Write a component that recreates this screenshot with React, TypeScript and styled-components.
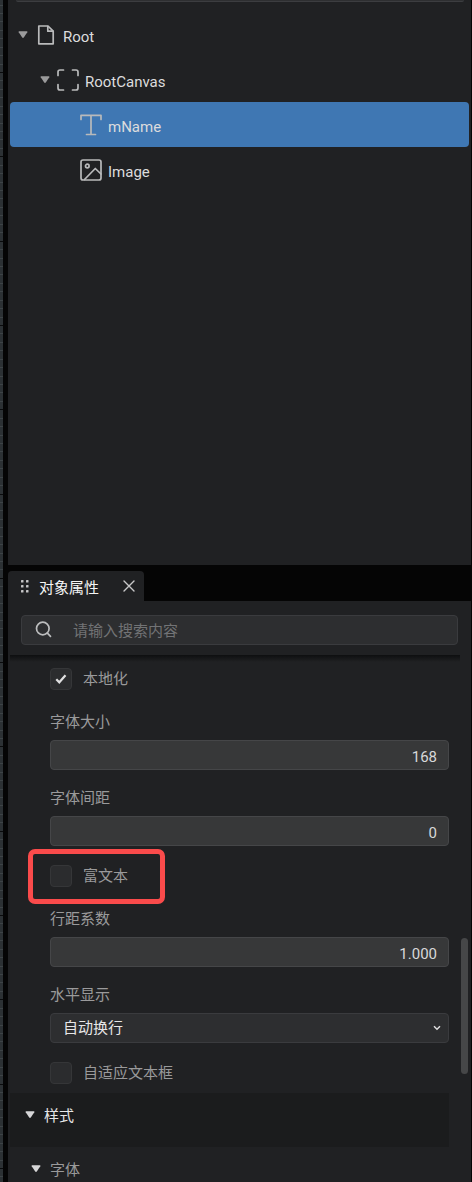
import React, { useState } from "react";
import styled, { createGlobalStyle } from "styled-components";

const GlobalStyle = createGlobalStyle`
  *, *::before, *::after { box-sizing: border-box; }
  html, body { margin: 0; background: #050505; }
  body, input, select, button {
    font-family: Roboto, "Noto Sans CJK SC", sans-serif;
    font-size: 15px;
  }
`;

const Shell = styled.div`
  display: flex;
  min-height: 100vh;
  padding-right: 1px;
  background: #050505;
`;

const RulerStrip = styled.div`
  position: relative;
  flex: none;
  width: 3px;
  margin-right: 5px;
  background: #2c3134;
  overflow: hidden;
`;

const RulerDrawing = styled.svg`
  position: absolute;
  top: 0;
  left: 0;
`;

const Dock = styled.div`
  flex: 1;
  min-width: 0;
  display: flex;
  flex-direction: column;
`;

const TreePanel = styled.section`
  flex: 1;
  padding: 0 2px;
  background: #202123;
`;

const FilterEdge = styled.div`
  height: 2px;
  margin: 0 5px 10px 6px;
  background: #2e2f31;
  border-bottom: 1px solid #3c3d40;
  border-radius: 0 0 4px 4px;
`;

const TreeList = styled.ul`
  list-style: none;
  margin: 0;
  padding: 0;
`;

const TreeRow = styled.li<{ $indent: number; $selected?: boolean }>`
  display: flex;
  align-items: center;
  height: 45px;
  padding-left: ${(p) => p.$indent}px;
  border-radius: 4px;
  color: #dcdcdd;
  background: ${(p) => (p.$selected ? "#3f77b3" : "transparent")};
`;

const TreeToggle = styled.button`
  display: flex;
  width: 10px;
  height: 8px;
  margin-right: 6px;
  padding: 0;
  border: 0;
  background: none;
  color: #9a9a9b;
`;

const TreeIcon = styled.span`
  display: flex;
  justify-content: center;
  width: 24px;
  padding-top: 1px;
  color: #b9babb;
`;

const TreeLabel = styled.span`
  padding-top: 4px;
  margin-left: 5px;
  line-height: 20px;
`;

const TabBar = styled.div`
  display: flex;
  margin-top: 6px;
`;

const Tab = styled.div`
  display: flex;
  align-items: center;
  width: 136px;
  height: 30px;
  padding: 0 9px 0 13px;
  border-radius: 4px 4px 0 0;
  background: #202123;
  color: #f4f4f4;
`;

const TabTitle = styled.span`
  flex: 1;
  margin-left: 10px;
  padding-top: 4px;
  line-height: 20px;
`;

const CloseButton = styled.button`
  display: flex;
  padding: 0;
  border: 0;
  background: none;
  color: #c8c8c9;
`;

const PropertyPanel = styled.section`
  background: #202123;
`;

const SearchBox = styled.label`
  display: flex;
  align-items: center;
  height: 30px;
  padding-left: 13px;
  border: 1px solid #3a3b3e;
  border-radius: 4px;
  background: #2d2e30;
  color: #bcbdbe;
`;

const SearchIcon = styled.svg`
  margin-bottom: 2px;
`;

const SearchHeader = styled.div`
  padding: 14px 13px 10px;
`;

const SearchInput = styled.input`
  flex: 1;
  min-width: 0;
  margin-left: 21px;
  padding: 1px 0 0;
  border: 0;
  outline: 0;
  background: none;
  color: #e2e2e3;
  &::placeholder { color: #727375; opacity: 1; }
`;

const HeaderShadow = styled.div`
  height: 7px;
  margin: 0 11px 0 2px;
  background: linear-gradient(#0e0f10, #202123);
`;

const PropertyBody = styled.div`
  display: flex;
  padding-left: 2px;
`;

const PropertyColumn = styled.div`
  flex: 1;
  min-width: 0;
`;

const FieldStack = styled.div`
  display: flex;
  flex-direction: column;
  gap: 16px;
  padding: 3px 0 5px 40px;
`;

const Field = styled.div`
  display: flex;
  flex-direction: column;
  gap: 6px;
`;

const FieldLabel = styled.label`
  line-height: 24px;
  color: #9a9a9b;
`;

const NumberInput = styled.input`
  width: 100%;
  height: 30px;
  padding: 3px 11px 0;
  border: 1px solid #454648;
  border-radius: 4px;
  outline: 0;
  background: #373839;
  color: #d8d8d9;
  text-align: right;
`;

const SelectFrame = styled.div`
  display: grid;
  grid-template-columns: 1fr 16px;
  align-items: center;
`;

const SelectInput = styled.select`
  grid-area: 1 / 1 / 2 / 3;
  width: 100%;
  height: 30px;
  padding: 0 12px;
  border: 1px solid #3a3b3e;
  border-radius: 4px;
  appearance: none;
  background: #2d2e30;
  color: #e6e6e7;
`;

const SelectArrow = styled.svg`
  grid-area: 1 / 2 / 2 / 3;
  pointer-events: none;
`;

const CheckRow = styled.label`
  position: relative;
  display: flex;
  align-items: center;
  align-self: flex-start;
  gap: 11px;
  padding: 3px 0 4px;
  line-height: 22px;
  color: #9a9a9b;
`;

const CheckFrame = styled.span`
  display: grid;
  place-items: center;
  width: 22px;
  height: 22px;
  > * { grid-area: 1 / 1; }
`;

const CheckInput = styled.input`
  width: 22px;
  height: 22px;
  margin: 0;
  appearance: none;
  border: 1px solid #353638;
  border-radius: 4px;
  background: #2b2c2e;
`;

const CheckMark = styled.svg`
  pointer-events: none;
`;

const Highlight = styled.span`
  position: absolute;
  inset: -13px -37px -13px -22px;
  border: 5px solid #fa4b4b;
  border-radius: 7px;
  pointer-events: none;
`;

const SectionHeader = styled.button<{ $nested?: boolean }>`
  display: flex;
  align-items: center;
  width: 100%;
  height: ${(p) => (p.$nested ? 35 : 54)}px;
  padding: ${(p) => (p.$nested ? "8px 0 0 21px" : "0 0 10px 15px")};
  border: 0;
  background: ${(p) => (p.$nested ? "transparent" : "#1b1c1d")};
  color: ${(p) => (p.$nested ? "#9a9a9b" : "#e6e6e7")};
`;

const SectionCaret = styled.span`
  display: flex;
  color: #d6d6d7;
`;

const SectionTitle = styled.span`
  margin-left: 9px;
  padding-top: 2px;
  line-height: 20px;
`;

const ScrollTrack = styled.div`
  flex: none;
  width: 22px;
  padding: 276px 3px 0 12px;
`;

const ScrollThumb = styled.div`
  height: 136px;
  border-radius: 4px;
  background: #464748;
`;

const TICK_SPACING = 8.43;
const TICKS = Array.from({ length: 400 }, (_, i) => i);

function Ruler() {
  return (
    <RulerStrip>
      <RulerDrawing width="3" height="3400" shapeRendering="crispEdges" aria-hidden="true">
        {TICKS.map((i) => (
          <rect
            key={i}
            x="0"
            y={Math.round(4.6 + i * TICK_SPACING)}
            width="3"
            height="1"
            fill={i % 10 === 8 ? "#0a0b0c" : "#3d4346"}
          />
        ))}
      </RulerDrawing>
    </RulerStrip>
  );
}

function Caret() {
  return (
    <svg width="10" height="8" viewBox="0 0 10 8" aria-hidden="true">
      <path d="M1.2 .3h7.6q1 .2.5 1L5.8 6.500q-.8.9-1.6 0L.7 1.300Q.2.500 1.2.3z" fill="currentColor" />
    </svg>
  );
}

const stroke = {
  fill: "none",
  stroke: "currentColor",
  strokeWidth: 1.7,
  strokeLinecap: "round" as const,
  strokeLinejoin: "round" as const,
};

function FileIcon() {
  return (
    <svg width="18" height="20" viewBox="0 0 18 20" {...stroke} aria-hidden="true">
      <path d="M1.800 1h9.200L16.200 6.200V18.800H1.800z" />
      <path d="M10.800 1.500V6.200h5" />
    </svg>
  );
}

function CanvasIcon() {
  return (
    <svg width="22" height="22" viewBox="0 0 22 22" {...stroke} aria-hidden="true">
      <path d="M1 6.500V3q0-2 2-2h3.500M15.500 1H19q2 0 2 2v3.500M21 15.500V19q0 2-2 2h-3.500M6.500 21H3q-2 0-2-2v-3.500" />
    </svg>
  );
}

function TextIcon() {
  return (
    <svg width="22" height="22" viewBox="0 0 22 22" {...stroke} aria-hidden="true">
      <path d="M1 5.500V1.300h20v4.200M11 1.500V20.500M6.500 20.500h9" />
    </svg>
  );
}

function ImageIcon() {
  return (
    <svg width="22" height="22" viewBox="0 0 22 22" {...stroke} aria-hidden="true">
      <rect x="1" y="1" width="20" height="20" rx="2" />
      <circle cx="7.300" cy="7" r="1.800" />
      <path d="M4.500 20.500L15.300 9.500L21 15" />
    </svg>
  );
}

function CheckField({ label, initial, highlighted }: { label: string; initial?: boolean; highlighted?: boolean }) {
  const [checked, setChecked] = useState(!!initial);
  return (
    <CheckRow>
      <CheckFrame>
        <CheckInput type="checkbox" checked={checked} onChange={(e) => setChecked(e.target.checked)} />
        {checked && (
          <CheckMark width="12" height="10" viewBox="0 0 12 10" aria-hidden="true">
            <path d="M1.300 5.200L4.300 8.300L10.500 1.300" fill="none" stroke="#e0e0e1" strokeWidth="2.200" />
          </CheckMark>
        )}
      </CheckFrame>
      <span>{label}</span>
      {highlighted && <Highlight />}
    </CheckRow>
  );
}

function NumberField({ id, label, value }: { id: string; label: string; value: string }) {
  return (
    <Field>
      <FieldLabel htmlFor={id}>{label}</FieldLabel>
      <NumberInput id={id} type="text" inputMode="decimal" defaultValue={value} />
    </Field>
  );
}

export default function App() {
  return (
    <>
      <GlobalStyle />
      <Shell>
        <Ruler />
        <Dock>
          <TreePanel>
            <FilterEdge />
            <TreeList>
              <TreeRow $indent={8}>
                <TreeToggle aria-label="Root"><Caret /></TreeToggle>
                <TreeIcon><FileIcon /></TreeIcon>
                <TreeLabel>Root</TreeLabel>
              </TreeRow>
              <TreeRow $indent={30}>
                <TreeToggle aria-label="RootCanvas"><Caret /></TreeToggle>
                <TreeIcon><CanvasIcon /></TreeIcon>
                <TreeLabel>RootCanvas</TreeLabel>
              </TreeRow>
              <TreeRow $indent={69} $selected>
                <TreeIcon><TextIcon /></TreeIcon>
                <TreeLabel>mName</TreeLabel>
              </TreeRow>
              <TreeRow $indent={69}>
                <TreeIcon><ImageIcon /></TreeIcon>
                <TreeLabel>Image</TreeLabel>
              </TreeRow>
            </TreeList>
          </TreePanel>

          <TabBar>
            <Tab>
              <svg width="8" height="13" viewBox="0 0 8 13" fill="#c4c4c5" aria-hidden="true">
                {[0, 5, 10].map((y) => (
                  <g key={y}>
                    <rect x="0" y={y} width="2.500" height="2.500" rx=".6" />
                    <rect x="5" y={y} width="2.500" height="2.500" rx=".6" />
                  </g>
                ))}
              </svg>
              <TabTitle>对象属性</TabTitle>
              <CloseButton aria-label="关闭">
                <svg width="12" height="12" viewBox="0 0 12 12" {...stroke} strokeWidth="1.400" aria-hidden="true">
                  <path d="M1 1l10 10M11 1L1 11" />
                </svg>
              </CloseButton>
            </Tab>
          </TabBar>

          <PropertyPanel>
            <SearchHeader>
              <SearchBox>
                <SearchIcon width="17" height="17" viewBox="0 0 17 17" {...stroke} aria-hidden="true">
                  <circle cx="7.800" cy="7.500" r="6.300" />
                  <path d="M12.400 12.200L15.500 15.300" />
                </SearchIcon>
                <SearchInput type="text" placeholder="请输入搜索内容" aria-label="请输入搜索内容" />
              </SearchBox>
            </SearchHeader>
            <HeaderShadow />
            <PropertyBody>
              <PropertyColumn>
                <FieldStack>
                  <CheckField label="本地化" initial />
                  <NumberField id="font-size" label="字体大小" value="168" />
                  <NumberField id="font-spacing" label="字体间距" value="0" />
                  <CheckField label="富文本" highlighted />
                  <NumberField id="line-factor" label="行距系数" value="1.000" />
                  <Field>
                    <FieldLabel htmlFor="horizontal">水平显示</FieldLabel>
                    <SelectFrame>
                      <SelectInput id="horizontal" defaultValue="wrap">
                        <option value="wrap">自动换行</option>
                      </SelectInput>
                      <SelectArrow width="8" height="6" viewBox="0 0 8 6" aria-hidden="true">
                        <path d="M1 1.200L4 4.200L7 1.200" fill="none" stroke="#dededf" strokeWidth="1.500" />
                      </SelectArrow>
                    </SelectFrame>
                  </Field>
                  <CheckField label="自适应文本框" />
                </FieldStack>
                <SectionHeader type="button">
                  <SectionCaret><Caret /></SectionCaret>
                  <SectionTitle>样式</SectionTitle>
                </SectionHeader>
                <SectionHeader type="button" $nested>
                  <SectionCaret><Caret /></SectionCaret>
                  <SectionTitle>字体</SectionTitle>
                </SectionHeader>
              </PropertyColumn>
              <ScrollTrack>
                <ScrollThumb />
              </ScrollTrack>
            </PropertyBody>
          </PropertyPanel>
        </Dock>
      </Shell>
    </>
  );
}
